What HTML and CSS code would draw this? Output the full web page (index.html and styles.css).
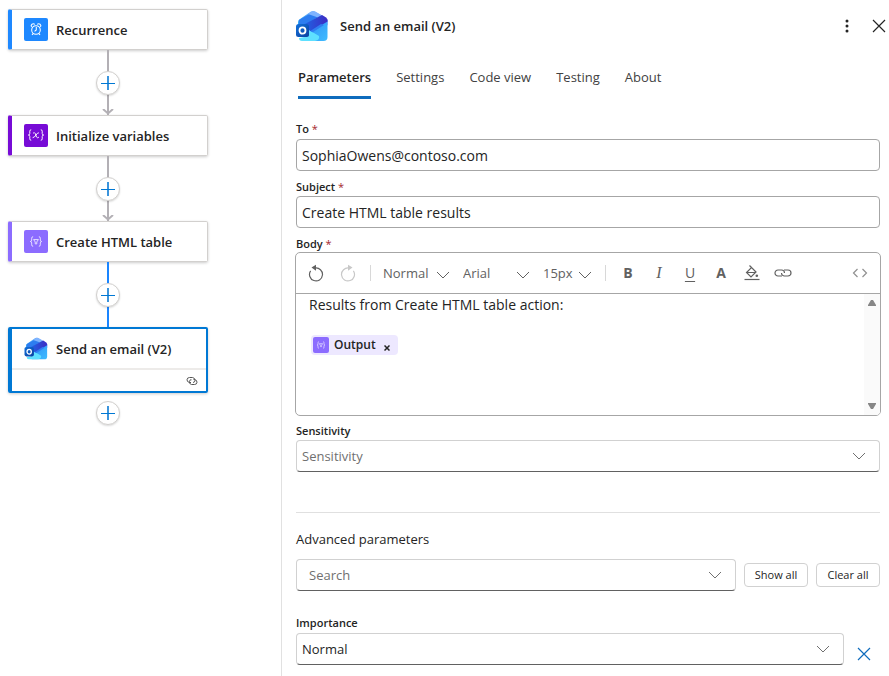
FILE: index.html
```html
<!DOCTYPE html>
<html lang="en">
<head>
    <meta charset="UTF-8">
    <meta name="viewport" content="width=device-width, initial-scale=1.0">
    <title>Send an email (V2)</title>
    <link rel="stylesheet" href="styles.css">
</head>
<body>
    <!-- shared icons -->
    <svg class="defs" width="0" height="0" aria-hidden="true">
        <defs>
            <linearGradient id="flap" x1="0" y1="0" x2="1" y2="0">
                <stop offset="0" stop-color="#2fa8f5"/>
                <stop offset="1" stop-color="#b9b4ff"/>
            </linearGradient>
            <linearGradient id="fold" x1="0" y1="0" x2="1" y2="0">
                <stop offset="0" stop-color="#1b6be8"/>
                <stop offset="1" stop-color="#3d2cc4"/>
            </linearGradient>
            <linearGradient id="pocket" x1="0" y1="0" x2="1" y2="1">
                <stop offset="0" stop-color="#2f8df5"/>
                <stop offset="1" stop-color="#3fbcff"/>
            </linearGradient>
            <linearGradient id="badge" x1="0" y1="0" x2="1" y2="1">
                <stop offset="0" stop-color="#1272dc"/>
                <stop offset="1" stop-color="#0a3f9e"/>
            </linearGradient>
            <symbol id="outlook" viewBox="0 0 32 32">
                <path fill="url(#flap)" d="M2 12q0-2 2-3L15 1.500q2-1.200 4 0L29 7q3 2 3 4v4L14 24 2 18z"/>
                <path fill="#2d7df0" d="M3 10 16 2.500l8 3.500L7 16l-4-1z"/>
                <path fill="#7fb4ff" d="M12 4 16 1.500q1.500-.8 3 0L25 5l-3 2.500z"/>
                <path fill="url(#pocket)" d="M31.500 10v17q0 4-4 4H10V22z"/>
                <path fill="url(#fold)" d="M5 16 26 5l4 2.500q2 1.500 1.500 4L14 22 5 19z"/>
                <path fill="#2f7df2" d="M12 22.500 25 14l3 1-14 9z"/>
                <path fill="#5ee0ff" d="M13 20q2 2 5 3l5 3q1 4-4 5H6q-3 0-3-3l10-2z"/>
                <rect fill="url(#badge)" y="14" width="13" height="13" rx="2.500"/>
                <ellipse cx="6.500" cy="20.500" rx="3" ry="3.200" fill="none" stroke="#fff" stroke-width="1.800"/>
            </symbol>
            <symbol id="compose" viewBox="0 0 24 24">
                <g fill="none" stroke="#e9e2ff" stroke-width="1">
                    <path d="M9 7Q7.500 7 7.500 8.500v2Q7.500 12 6 12q1.500 0 1.500 1.500v2Q7.500 17 9 17M15 7q1.500 0 1.500 1.500v2q0 1.500 1.500 1.500-1.500 0-1.500 1.500v2Q16.500 17 15 17"/>
                    <path d="M9.500 10h5L12.800 12.500v2h-1.600v-2z"/>
                </g>
            </symbol>
            <symbol id="chevron" viewBox="0 0 14 8">
                <path d="M1 1l6 6 6-6" fill="none" stroke="currentColor"/>
            </symbol>
            <symbol id="plus" viewBox="0 0 14 14">
                <path d="M7 0v14" stroke="#3b94dc" stroke-width="2"/>
                <path d="M0 7.500h14" stroke="#0078d4"/>
            </symbol>
            <symbol id="cross" viewBox="0 0 14 14">
                <path d="M1 1l12 12M13 1L1 13" stroke="currentColor" stroke-width="1.200"/>
            </symbol>
            <symbol id="undo" viewBox="0 0 16 18">
                <path d="M7 4A6.500 6.500 0 1 1 2.600 6.800" fill="none" stroke="currentColor" stroke-width="1.200"/>
                <path d="M3.500 3.500 8 .8v6z" fill="currentColor"/>
            </symbol>
            <symbol id="links" viewBox="0 0 18 8">
                <g fill="none" stroke="currentColor" stroke-width="1.200">
                    <path d="M8 7H4a3 3 0 0 1 0-6h3.500a3 3 0 0 1 3 3"/>
                    <path d="M10 1h4a3 3 0 0 1 0 6h-3.500a3 3 0 0 1-3-3"/>
                </g>
            </symbol>
        </defs>
    </svg>

    <main class="designer">
        <section class="canvas" aria-label="Workflow">
            <div class="card recurrence">
                <div class="card-title">
                    <svg class="card-icon" viewBox="0 0 24 24">
                        <g fill="none" stroke="#fff" stroke-width="1.100">
                            <circle cx="12" cy="12.500" r="4.500"/>
                            <path d="M12.300 9.500v3l-1.800 1.500M9 16.300l-1.200 1.400M15 16.300l1.200 1.400M7.300 9.500q-1-2 .5-3t3 .2M16.700 9.500q1-2-.5-3t-3 .2"/>
                        </g>
                    </svg>
                    <span>Recurrence</span>
                </div>
            </div>
            <div class="connector arrow">
                <button class="add" aria-label="Add step"><svg><use href="#plus"/></svg></button>
                <svg class="tip" viewBox="0 0 12 6"><path d="M1 0l5 4.500L11 0"/></svg>
            </div>
            <div class="card variables">
                <div class="card-title">
                    <svg class="card-icon" viewBox="0 0 24 24">
                        <g fill="none" stroke="#fff" stroke-width="1">
                            <path d="M7 6Q5.500 6 5.500 7.500v2.500Q5.500 11.500 4 11.500q1.500 0 1.500 1.500v2.500Q5.500 17 7 17M17 6q1.500 0 1.500 1.500v2.500q0 1.500 1.500 1.500-1.500 0-1.500 1.500v2.500Q18.500 17 17 17"/>
                            <path d="M9 9.500q1.700-1 2.300.5l1.200 3.500q.6 1.500 2.500.3M15 9.200q-1.500-.2-3 2.300t-3.500 2.800"/>
                        </g>
                    </svg>
                    <span>Initialize variables</span>
                </div>
            </div>
            <div class="connector arrow">
                <button class="add" aria-label="Add step"><svg><use href="#plus"/></svg></button>
                <svg class="tip" viewBox="0 0 12 6"><path d="M1 0l5 4.500L11 0"/></svg>
            </div>
            <div class="card compose">
                <div class="card-title">
                    <svg class="card-icon"><use href="#compose"/></svg>
                    <span>Create HTML table</span>
                </div>
            </div>
            <div class="connector active">
                <button class="add" aria-label="Add step"><svg><use href="#plus"/></svg></button>
            </div>
            <div class="card selected">
                <div class="card-title">
                    <svg class="card-icon"><use href="#outlook"/></svg>
                    <span>Send an email (V2)</span>
                </div>
                <div class="card-footer"><svg viewBox="0 0 12 10">
                    <g fill="none" stroke="#555">
                        <path d="M5 6.500H3.500Q1 6 1 3.800T3.500 1.500h3Q9 2 9 4.200T7 6.500"/>
                        <path d="M7.500 3.500h1Q11 4 11 6.200T8.500 8.500h-3Q3 8 3.500 5.500T5.500 3.800"/>
                    </g>
                </svg></div>
            </div>
            <button class="add last" aria-label="Add step"><svg><use href="#plus"/></svg></button>
        </section>

        <section class="panel">
            <header class="panel-header">
                <svg class="logo"><use href="#outlook"/></svg>
                <h1>Send an email (V2)</h1>
                <button class="icon-btn" aria-label="More">
                    <svg width="4" height="14" viewBox="0 0 4 14" fill="#242424"><circle cx="2" cy="2" r="1.500"/><circle cx="2" cy="7" r="1.500"/><circle cx="2" cy="12" r="1.500"/></svg>
                </button>
                <button class="icon-btn" aria-label="Close">
                    <svg width="14" height="14"><use href="#cross"/></svg>
                </button>
            </header>

            <nav class="tabs">
                <a class="current" href="#parameters">Parameters</a>
                <a href="#settings">Settings</a>
                <a href="#code">Code view</a>
                <a href="#testing">Testing</a>
                <a href="#about">About</a>
            </nav>

            <form class="fields" id="parameters">
                <label for="to">To <em>*</em></label>
                <input class="box" id="to" type="text" value="SophiaOwens@contoso.com">

                <label for="subject">Subject <em>*</em></label>
                <input class="box" id="subject" type="text" value="Create HTML table results">

                <label id="body-label">Body <em>*</em></label>
                <div class="editor">
                    <div class="toolbar">
                        <button type="button" class="undo" aria-label="Undo"><svg width="16" height="18"><use href="#undo"/></svg></button>
                        <button type="button" class="redo" aria-label="Redo" disabled><svg width="16" height="18"><use href="#undo"/></svg></button>
                        <span class="divider"></span>
                        <div class="pick style">
                            <select aria-label="Style"><option>Normal</option></select>
                            <svg><use href="#chevron"/></svg>
                        </div>
                        <div class="pick font">
                            <select aria-label="Font"><option>Arial</option></select>
                            <svg><use href="#chevron"/></svg>
                        </div>
                        <div class="pick size">
                            <select aria-label="Size"><option>15px</option></select>
                            <svg><use href="#chevron"/></svg>
                        </div>
                        <span class="divider"></span>
                        <div class="formats">
                            <button type="button" class="bold">B</button>
                            <button type="button" class="italic">I</button>
                            <button type="button" class="underline">U</button>
                            <button type="button" class="bold">A</button>
                            <button type="button" aria-label="Fill color">
                                <svg width="16" height="16" viewBox="0 0 16 16">
                                    <path d="M7.500 2.500l4.500 4.500-5 5L2.500 7.500zM3 7.500h8.500M5.500.500l2.500 2.500" fill="none" stroke="currentColor" stroke-width="1.200"/>
                                    <circle cx="12.800" cy="10.800" r="1.300" fill="currentColor"/>
                                    <path d="M.5 14.500h15" stroke="currentColor" stroke-width="1.200"/>
                                </svg>
                            </button>
                            <button type="button" aria-label="Link"><svg width="18" height="8"><use href="#links"/></svg></button>
                        </div>
                        <button type="button" class="code" aria-label="Code view">
                            <svg width="16" height="10" viewBox="0 0 16 10"><path d="M5.500 1L1.500 5l4 4M10.500 1l4 4-4 4" fill="none" stroke="currentColor" stroke-width="1.200"/></svg>
                        </button>
                    </div>
                    <div class="content">
                        <div class="text" contenteditable="true" role="textbox" aria-labelledby="body-label" spellcheck="false">
                            <p>Results from Create HTML table action:</p>
                            <span class="token" contenteditable="false">
                                <svg class="token-icon"><use href="#compose"/></svg>
                                <span>Output</span>
                                <button type="button" aria-label="Remove"><svg width="6" height="6" viewBox="0 0 6 6"><path d="M.5.5l5 5M5.500.500l-5 5" stroke="currentColor" stroke-width="1.500"/></svg></button>
                            </span>
                        </div>
                        <div class="scroll">
                            <svg width="8" height="6" viewBox="0 0 8 6"><path d="M3 0h2l3 5v1H0V5z"/></svg>
                            <svg width="8" height="6" viewBox="0 0 8 6"><path d="M3 6h2l3-5V0H0v1z"/></svg>
                        </div>
                    </div>
                </div>

                <label for="sensitivity">Sensitivity</label>
                <div class="dropdown">
                    <select class="box hint" id="sensitivity"><option>Sensitivity</option></select>
                    <svg><use href="#chevron"/></svg>
                </div>

                <h2>Advanced parameters</h2>
                <div class="search-row">
                    <div class="dropdown">
                        <input class="box search" type="text" placeholder="Search" aria-label="Search">
                        <svg><use href="#chevron"/></svg>
                    </div>
                    <button type="button" class="small">Show all</button>
                    <button type="button" class="small">Clear all</button>
                </div>

                <label for="importance">Importance</label>
                <div class="importance-row">
                    <div class="dropdown">
                        <select class="box" id="importance"><option>Normal</option></select>
                        <svg><use href="#chevron"/></svg>
                    </div>
                    <button type="button" class="remove" aria-label="Remove Importance"><svg width="14" height="14"><use href="#cross"/></svg></button>
                </div>
            </form>
        </section>
    </main>
</body>
</html>
```
FILE: styles.css
```css
* {
    box-sizing: border-box;
}
body {
    margin: 0;
    background: #fff;
    color: #242424;
    font-family: "Open Sans", "Noto Sans", sans-serif;
    font-size: 13px;
    line-height: 20px;
}
button, input, select {
    font: inherit;
    color: inherit;
}
button {
    display: flex;
    align-items: center;
    justify-content: center;
    padding: 0;
    border: none;
    background: none;
}
svg {
    display: block;
    flex: none;
}
.defs {
    position: absolute;
}
.designer {
    display: flex;
    min-height: 100vh;
}

/* workflow */
.canvas {
    flex: 0 0 281px;
    padding: 9px 0 0 8px;
}
.card {
    width: 200px;
    border: 1px solid #d2d0ce;
    border-left: 4px solid;
    border-radius: 2px;
    box-shadow: 0 1px 3px rgba(0, 0, 0, 0.2);
}
.card-title {
    display: flex;
    align-items: center;
    gap: 8px;
    height: 39px;
    padding-left: 12px;
    font-size: 13px;
    font-weight: 600;
}
.card-icon {
    width: 24px;
    height: 23px;
    border-radius: 2px;
}
.recurrence {
    border-left-color: #1e88ff;
}
.recurrence .card-icon {
    background: #1e88ff;
}
.variables {
    border-left-color: #770bd6;
}
.variables .card-icon {
    background: #770bd6;
}
.compose {
    border-left-color: #8c6cff;
}
.compose .card-icon {
    background: #8c6cff;
}
.selected {
    border: 2px solid #0078d4;
    border-left-width: 4px;
}
.card-footer {
    display: flex;
    align-items: center;
    justify-content: flex-end;
    height: 23px;
    padding-right: 8px;
    border-top: 2px solid #edebe9;
}
.card-footer svg {
    width: 12px;
    height: 10px;
}
.connector {
    position: relative;
    display: flex;
    align-items: center;
    justify-content: center;
    width: 200px;
    height: 65px;
    background: linear-gradient(#b3b0b5, #b3b0b5) center / 2px 100% no-repeat;
}
.active {
    background-image: linear-gradient(#1a85ff, #1a85ff);
}
.tip {
    position: absolute;
    bottom: 0;
    width: 12px;
    height: 6px;
    fill: none;
    stroke: #b3b0b5;
    stroke-width: 2;
}
.add {
    width: 24px;
    height: 24px;
    border: 1px solid #d2d0ce;
    border-radius: 50%;
    background: #fff;
    box-shadow: 0 1px 2px rgba(0, 0, 0, 0.15);
}
.add svg {
    width: 14px;
    height: 14px;
}
.last {
    margin: 8px 88px;
}

/* details panel */
.panel {
    flex: 1;
    min-width: 0;
    padding: 10px 9px 12px 14px;
    border-left: 1px solid #e1e1e1;
}
.panel-header {
    display: flex;
    align-items: center;
    gap: 12px;
    height: 32px;
    margin-right: -9px;
}
.logo {
    width: 32px;
    height: 32px;
}
h1 {
    flex: 1;
    margin: 0;
    font-size: 13px;
    font-weight: 600;
}
.icon-btn {
    width: 20px;
    height: 32px;
}
.tabs {
    display: flex;
    gap: 25px;
    height: 44px;
    margin-top: 13px;
    padding-left: 2px;
    font-size: 13px;
}
.tabs a {
    padding-top: 12px;
    color: #424242;
    text-decoration: none;
}
.tabs .current {
    border-bottom: 3px solid #0f6cbd;
    color: #242424;
    font-weight: 600;
}
.fields {
    display: flex;
    flex-direction: column;
    margin-top: 20px;
}
label {
    height: 25px;
    padding-top: 8px;
    font-size: 11px;
    font-weight: 600;
    line-height: 16px;
}
.fields label:first-child {
    height: 20px;
    padding-top: 2px;
}
label em {
    color: #a4262c;
    font-style: normal;
    font-weight: 400;
}
.box {
    width: 100%;
    height: 32px;
    padding: 0 5px;
    border: 1px solid #a6a6a6;
    border-radius: 4px;
    background: #fff;
    font-size: 14px;
    appearance: none;
}
.dropdown {
    position: relative;
    flex: 1;
}
.dropdown .box {
    display: block;
    border-color: #d1d1d1;
    border-bottom-color: #616161;
    font-size: 13px;
}
.dropdown svg {
    position: absolute;
    top: 12px;
    right: 14px;
    width: 14px;
    height: 8px;
    color: #707070;
    pointer-events: none;
}
.dropdown .hint, .box::placeholder {
    color: #707070;
}
.dropdown .search {
    padding-left: 12px;
}

/* body editor */
.editor {
    height: 164px;
    margin: -1px -1px 0;
    border: 1px solid #a6a6a6;
    border-radius: 5px;
    overflow: hidden;
}
.editor + label {
    height: 24px;
    padding-top: 7px;
}
.toolbar {
    display: flex;
    align-items: center;
    height: 41px;
    padding: 0 12px;
    border-bottom: 1px solid #a6a6a6;
    color: #616161;
}
.redo {
    margin: 0 14px 0 16px;
    color: #c8c8c8;
}
.redo svg {
    transform: scaleX(-1);
}
.divider {
    width: 1px;
    height: 16px;
    background: #d8d8d8;
}
.pick {
    position: relative;
}
.pick select {
    width: 100%;
    padding: 0;
    border: none;
    background: none;
    font-size: 13px;
    appearance: none;
}
.pick svg {
    position: absolute;
    top: 8px;
    right: 0;
    width: 14px;
    height: 8px;
    pointer-events: none;
}
.style {
    width: 67px;
    margin-left: 12px;
}
.font {
    width: 67px;
    margin-left: 13px;
}
.size {
    width: 49px;
    margin: 0 13px;
}
.formats {
    display: flex;
    gap: 11px;
    margin-left: 12px;
}
.formats button {
    width: 20px;
    height: 20px;
    font-size: 14px;
}
.formats .bold {
    font-weight: 700;
}
.formats .italic {
    font-family: "Liberation Serif", serif;
    font-size: 16px;
    font-style: italic;
}
.formats .underline {
    text-decoration: underline;
    text-underline-offset: 3px;
}
.code {
    margin-left: auto;
    color: #909090;
}
.content {
    display: flex;
    height: 121px;
}
.text {
    flex: 1;
    padding: 1px 13px;
    font-size: 14px;
    outline: none;
}
.text p {
    margin: 0 0 20px;
}
.token {
    display: inline-flex;
    align-items: center;
    height: 20px;
    margin-left: 2px;
    padding: 0 8px 0 2px;
    border-radius: 4px;
    background: #ede8ff;
    font-size: 12px;
    font-weight: 600;
}
.token-icon {
    width: 16px;
    height: 16px;
    margin-right: 5px;
    border-radius: 2px;
    background: #8c6cff;
}
.token button {
    margin: 6px 0 0 8px;
}
.scroll {
    display: flex;
    flex-direction: column;
    align-items: center;
    justify-content: space-between;
    width: 16px;
    padding: 6px 0;
    background: #fafafa;
    fill: #868686;
}

/* advanced parameters */
h2 {
    margin: 40px 0 0;
    padding: 16px 0 10px;
    border-top: 1px solid #e0e0e0;
    font-size: 13px;
    font-weight: 400;
}
.search-row, .importance-row {
    display: flex;
    align-items: center;
    gap: 8px;
}
.search-row {
    margin-bottom: 16px;
}
.small {
    width: 64px;
    height: 24px;
    border: 1px solid #d1d1d1;
    border-radius: 4px;
    background: #fff;
    font-size: 11px;
}
.remove {
    width: 24px;
    height: 24px;
    margin: 10px 4px 0 0;
    color: #0f6cbd;
}
```
